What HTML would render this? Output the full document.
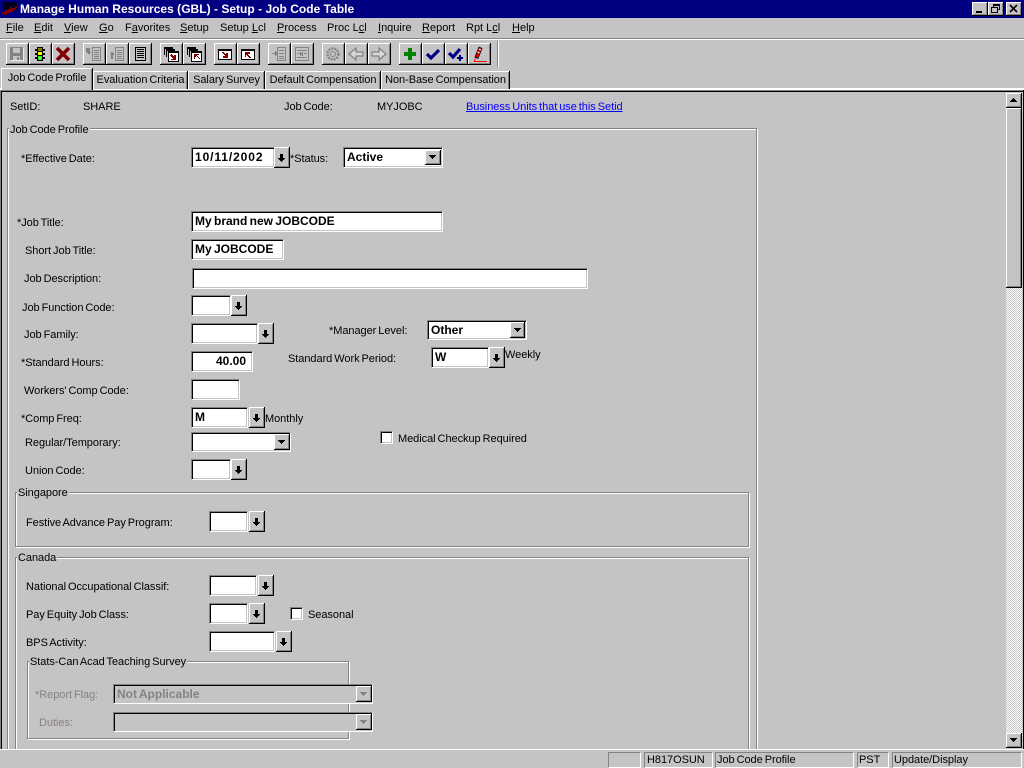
<!DOCTYPE html>
<html><head><meta charset="utf-8"><title>Manage Human Resources</title>
<style>
html,body{margin:0;padding:0;width:1024px;height:768px;overflow:hidden;background:#c6c3c6}
body{position:relative;font:11px/13px "Liberation Sans",sans-serif;color:#000;word-spacing:-1px;letter-spacing:-.05px}
div,span,a,svg{position:absolute}
u{position:static}
.t{white-space:nowrap}
.m{word-spacing:0;letter-spacing:0}
.f{box-sizing:border-box;background:#fff;border:1px solid;border-color:#848284 #fff #fff #848284;box-shadow:inset 1px 1px 0 #000,inset -1px -1px 0 #c6c3c6;font:bold 12px/15px "Liberation Sans",sans-serif;padding:2px 0 0 3px;white-space:nowrap;letter-spacing:0}
.d{background:#c6c3c6;color:#848284}
.b{box-sizing:border-box;background:#c6c3c6;box-shadow:inset -1px -1px 0 #000,inset 1px 1px 0 #fff,inset -2px -2px 0 #848284}
.tb{top:43px;width:23px;height:22px}
.tb svg{left:3px;top:3px;width:16px;height:16px}
.tab{box-sizing:border-box;top:71px;height:18px;background:#c6c3c6;border-left:1px solid #fff;border-top:1px solid #fff;box-shadow:inset -1px 0 0 #848284,1px 0 0 #000;text-align:center;line-height:17px;white-space:nowrap}
.g{box-sizing:border-box;border:1px solid #848284;box-shadow:inset 1px 1px 0 #fff,1px 1px 0 #fff}
.lg{background:#c6c3c6;padding:0 1px;white-space:nowrap}
.s{box-sizing:border-box;top:752px;height:16px;border:1px solid;border-color:#848284 #fff #fff #848284;padding-left:1px;line-height:15px;white-space:nowrap}
.dis{color:#848284}
</style></head><body>
<svg width="0" height="0" style="left:0;top:0"><defs>
<symbol id="la" viewBox="0 0 7 8"><path d="M2 0h3v4h2v1h-1v1h-1v1h-1v1h-1v-1h-1v-1h-1v-1h-1v-1h2z"/></symbol>
<symbol id="ca" viewBox="0 0 7 4"><path d="M0 0h7v1h-1v1h-1v1h-1v1h-1v-1h-1v-1h-1v-1h-1z"/></symbol>
<symbol id="cu" viewBox="0 0 7 4"><path d="M3 0h1v1h1v1h1v1h1v1h-7v-1h1v-1h1v-1h1z"/></symbol>
</defs></svg>

<!-- Title bar -->
<div style="left:0;top:0;width:1024px;height:18px;background:#000080"></div>
<svg style="left:2px;top:1px" width="16" height="16" viewBox="0 0 16 16" shape-rendering="crispEdges"><path fill="#000" d="M1 1h14v8h-14z" opacity=".75"/><path fill="#840000" d="M0 11h3v-2h3v-1h2v-2h2v1h3v-2h2v2h-1v2h-3v2h-3v1h-3v2h-3v-1h-2z"/></svg>
<span class="t" style="left:20px;top:2px;color:#fff;font:bold 12px/15px 'Liberation Sans',sans-serif;letter-spacing:.02px;word-spacing:0">Manage Human Resources (GBL) - Setup - Job Code Table</span>
<div class="b" style="left:972px;top:2px;width:16px;height:14px"><div style="left:4px;top:9px;width:6px;height:2px;background:#000"></div></div>
<div class="b" style="left:988px;top:2px;width:16px;height:14px"><svg style="left:3px;top:2px" width="9" height="9" viewBox="0 0 9 9" shape-rendering="crispEdges"><path d="M2 0h7v6h-2v3h-7v-6h2zM3 1v2h4v2h1v-3h-5zM1 4v4h5v-4z" fill-rule="evenodd"/></svg></div>
<div class="b" style="left:1006px;top:2px;width:16px;height:14px"><svg style="left:3px;top:2px" width="9" height="9" viewBox="0 0 9 9"><path d="M1 1l7 7M8 1l-7 7" stroke="#000" stroke-width="1.6"/></svg></div>

<!-- Menu -->
<span class="t m" style="left:6px;top:22px"><u>F</u>ile</span>
<span class="t m" style="left:34px;top:22px"><u>E</u>dit</span>
<span class="t m" style="left:64px;top:22px"><u>V</u>iew</span>
<span class="t m" style="left:99px;top:22px"><u>G</u>o</span>
<span class="t m" style="left:125px;top:22px">F<u>a</u>vorites</span>
<span class="t m" style="left:180px;top:22px"><u>S</u>etup</span>
<span class="t m" style="left:220px;top:22px">Setup <u>L</u>cl</span>
<span class="t m" style="left:277px;top:22px"><u>P</u>rocess</span>
<span class="t m" style="left:327px;top:22px">Proc L<u>c</u>l</span>
<span class="t m" style="left:378px;top:22px"><u>I</u>nquire</span>
<span class="t m" style="left:422px;top:22px"><u>R</u>eport</span>
<span class="t m" style="left:466px;top:22px">Rpt L<u>c</u>l</span>
<span class="t m" style="left:512px;top:22px"><u>H</u>elp</span>
<div style="left:0;top:38px;width:1024px;height:1px;background:#848284"></div>
<div style="left:0;top:39px;width:1024px;height:1px;background:#fff"></div>

<!-- Toolbar -->
<div class="b tb" style="left:6px"><svg viewBox="0 0 16 16" shape-rendering="crispEdges"><path fill="#fff" d="M2 2h13v13h-13z" opacity=".7"/><path fill="#848284" d="M1 1h13v13h-13z"/><path fill="#c6c3c6" d="M4 2h7v5h-7zM4 10h7v4h-7z"/><path fill="#848284" d="M8 11h2v3h-2z"/></svg></div>
<div class="b tb" style="left:29px"><svg viewBox="0 0 16 16" shape-rendering="crispEdges"><path fill="#000" d="M5 1h6v14h-6zM3 3h2v2h-2zM11 3h2v2h-2zM3 7h2v2h-2zM11 7h2v2h-2zM3 11h2v2h-2zM11 11h2v2h-2z"/><path fill="#ffff00" d="M6 6h4v3h-4z"/><path fill="#848200" d="M6 2h4v3h-4z"/><path fill="#00ff00" d="M6 10h4v4h-4z"/><path fill="#c6c3c6" d="M7 11h2v2h-2z"/></svg></div>
<div class="b tb" style="left:52px"><svg viewBox="0 0 16 16"><path d="M2 2l12 12M14 2l-12 12" stroke="#840000" stroke-width="3.6"/></svg></div>

<div class="b tb" style="left:83px"><svg viewBox="0 0 16 16" shape-rendering="crispEdges"><path fill="#848284" d="M0 2h4v4h1v1h-1v1h-2v-1h-1v-1h-1zM6 1h9v14h-9zM7 2v12h7v-12z" fill-rule="evenodd"/><path fill="#848284" d="M8 4h5v1h-5zM8 6h5v1h-5zM8 8h5v1h-5zM8 10h5v1h-5zM8 12h5v1h-5z"/></svg></div>
<div class="b tb" style="left:106px"><svg viewBox="0 0 16 16" shape-rendering="crispEdges"><path fill="#848284" d="M2 6h2v1h1v2h-1v4h-2v-4h-1v-1h1zM6 1h9v14h-9zM7 2v12h7v-12z" fill-rule="evenodd"/><path fill="#848284" d="M8 4h5v1h-5zM8 6h5v1h-5zM8 8h5v1h-5zM8 10h5v1h-5zM8 12h5v1h-5z"/></svg></div>
<div class="b tb" style="left:129px"><svg viewBox="0 0 16 16" shape-rendering="crispEdges"><path fill="#000" d="M3 1h11v14h-11zM4 2v12h9v-12z" fill-rule="evenodd"/><path fill="#000" d="M5 3h7v1h-7zM5 5h7v1h-7zM5 7h7v1h-7zM5 9h7v1h-7zM5 11h7v1h-7z"/></svg></div>

<div class="b tb" style="left:160px"><svg viewBox="0 0 16 16" shape-rendering="crispEdges"><path fill="#000" d="M1 1h9v1h-8v7h-1zM2 1h8v2h-8zM3 3h9v1h-8v7h-1zM4 3h8v2h-8z"/><path fill="#000" d="M5 5h11v11h-11z"/><path fill="#fff" d="M6 7h9v8h-9z"/><path fill="#840000" d="M8 8h1v1h1v1h1v-1h2v5h-5v-1h2v-1h-1v-1h-1v-1h-1z"/></svg></div>
<div class="b tb" style="left:183px"><svg viewBox="0 0 16 16" shape-rendering="crispEdges"><path fill="#000" d="M1 1h9v1h-8v7h-1zM2 1h8v2h-8zM3 3h9v1h-8v7h-1zM4 3h8v2h-8z"/><path fill="#000" d="M5 5h11v11h-11z"/><path fill="#fff" d="M6 7h9v8h-9z"/><path fill="#840000" d="M8 8h5v1h-2v1h1v1h1v1h1v1h-1v-1h-1v-1h-1v-1h-1v1h-1v2h-1z"/></svg></div>

<div class="b tb" style="left:214px"><svg viewBox="0 0 16 16" shape-rendering="crispEdges"><path fill="#000" d="M1 3h14v11h-14z"/><path fill="#fff" d="M2 5h12v8h-12z"/><path fill="#840000" d="M5 6h2v1h1v1h1v-1h2v5h-5v-2h2v-1h-1v-1h-1v-1h-1z"/></svg></div>
<div class="b tb" style="left:237px"><svg viewBox="0 0 16 16" shape-rendering="crispEdges"><path fill="#000" d="M1 3h14v11h-14z"/><path fill="#fff" d="M2 5h12v8h-12z"/><path fill="#840000" d="M5 6h5v2h-2v1h1v1h1v1h1v1h-2v-1h-1v-1h-1v-1h-1v2h-1z"/></svg></div>

<div class="b tb" style="left:268px"><svg viewBox="0 0 16 16" shape-rendering="crispEdges"><path fill="#848284" d="M6 1h9v14h-9zM7 2v12h7v-12z" fill-rule="evenodd"/><path fill="#848284" d="M8 4h5v1h-5zM8 7h5v1h-5zM8 10h5v1h-5zM8 12h5v1h-5zM1 7h3v-2h1v1h1v1h1v1h-1v1h-1v1h-1v-2h-3z"/></svg></div>
<div class="b tb" style="left:291px"><svg viewBox="0 0 16 16" shape-rendering="crispEdges"><path fill="#848284" d="M1 1h14v14h-14zM2 2v12h12v-12z" fill-rule="evenodd"/><path fill="#848284" d="M3 4h10v1h-10zM3 11h10v1h-10zM3 7h3v1h-3zM10 7h3v1h-3zM6 6h1v1h1v-1h1v4h-1v-1h-1v1h-1z"/></svg></div>

<div class="b tb" style="left:322px"><svg viewBox="0 0 16 16"><circle cx="8" cy="8" r="5.5" fill="none" stroke="#848284" stroke-width="2.4" stroke-dasharray="2 1"/><circle cx="8" cy="8" r="2.5" fill="none" stroke="#848284"/></svg></div>
<div class="b tb" style="left:345px"><svg viewBox="0 0 16 16"><path d="M1 8l7-6v4h7v4h-7v4z" fill="#d8d6d8" stroke="#848284" stroke-width="1.300"/></svg></div>
<div class="b tb" style="left:368px"><svg viewBox="0 0 16 16"><path d="M15 8l-7-6v4h-7v4h7v4z" fill="#d8d6d8" stroke="#848284" stroke-width="1.300"/></svg></div>

<div class="b tb" style="left:399px"><svg viewBox="0 0 16 16" shape-rendering="crispEdges"><path fill="#008200" d="M6 2h4v4h4v4h-4v4h-4v-4h-4v-4h4z"/></svg></div>
<div class="b tb" style="left:422px"><svg viewBox="0 0 16 16"><path d="M2 8l4 4 8-8" fill="none" stroke="#000084" stroke-width="3.200"/></svg></div>
<div class="b tb" style="left:445px"><svg viewBox="0 0 16 16"><path d="M1 7l4 4 7-8" fill="none" stroke="#000084" stroke-width="3.200"/><path d="M9 12h6M12 9v6" stroke="#000084" stroke-width="2"/></svg></div>
<div class="b tb" style="left:468px"><svg viewBox="0 0 18 16" style="width:18px"><path d="M4 11l4-10 3 1.500-4 10z" fill="#e00000" stroke="#000" stroke-width=".8"/><path d="M6.500 6l2 1M8 3l2 1" stroke="#fff" stroke-width="1.200"/><path d="M3 15.500l1.500-3" stroke="#f00"/><path d="M3 15.500h13" stroke="#f00" stroke-width="1"/></svg></div>
<div style="left:497px;top:41px;width:1px;height:26px;background:#848284"></div>
<div style="left:498px;top:41px;width:1px;height:26px;background:#fff"></div>

<!-- Tabs -->
<div style="left:0;top:88px;width:1024px;height:2px;background:#fff"></div>
<div class="tab" style="left:93px;width:94px">Evaluation Criteria</div>
<div class="tab" style="left:188px;width:76px">Salary Survey</div>
<div class="tab" style="left:265px;width:115px">Default Compensation</div>
<div class="tab" style="left:381px;width:128px">Non-Base Compensation</div>
<div class="tab" style="left:1px;top:68px;width:91px;height:22px;line-height:18px;z-index:2;box-shadow:inset -1px 0 0 #848284,1px 0 0 #000">Job Code Profile</div>

<!-- Content frame -->
<div style="left:0;top:90px;width:1024px;height:1px;background:#848284"></div>
<div style="left:0;top:91px;width:1024px;height:1px;background:#000"></div>
<div style="left:0;top:91px;width:1px;height:658px;background:#848284"></div>
<div style="left:1px;top:91px;width:1px;height:658px;background:#000"></div>
<div style="left:1023px;top:90px;width:1px;height:659px;background:#000"></div>

<span class="t" style="left:10px;top:101px">SetID:</span>
<span class="t" style="left:83px;top:101px">SHARE</span>
<span class="t" style="left:284px;top:101px">Job Code:</span>
<span class="t" style="left:377px;top:101px">MYJOBC</span>
<a class="t" href="#" style="left:466px;top:101px;color:#0000ff;text-decoration:underline">Business Units that use this Setid</a>

<!-- Group boxes -->
<div class="g" style="left:7px;top:128px;width:750px;height:630px"></div>
<span class="t lg" style="left:9px;top:124px">Job Code Profile</span>
<div class="g" style="left:15px;top:492px;width:734px;height:55px"></div>
<span class="t lg" style="left:17px;top:487px">Singapore</span>
<div class="g" style="left:15px;top:557px;width:734px;height:200px"></div>
<span class="t lg" style="left:17px;top:552px">Canada</span>
<div class="g" style="left:27px;top:661px;width:322px;height:78px"></div>
<span class="t lg dis" style="left:29px;top:656px;color:#000">Stats-Can Acad Teaching Survey</span>

<!-- Labels -->
<span class="t" style="left:21px;top:153px">*Effective Date:</span>
<span class="t" style="left:290px;top:153px">*Status:</span>
<span class="t" style="left:17px;top:217px">*Job Title:</span>
<span class="t" style="left:25px;top:245px">Short Job Title:</span>
<span class="t" style="left:24px;top:273px">Job Description:</span>
<span class="t" style="left:22px;top:302px">Job Function Code:</span>
<span class="t" style="left:24px;top:329px">Job Family:</span>
<span class="t" style="left:21px;top:357px">*Standard Hours:</span>
<span class="t" style="left:24px;top:385px">Workers' Comp Code:</span>
<span class="t" style="left:21px;top:413px">*Comp Freq:</span>
<span class="t" style="left:25px;top:437px">Regular/Temporary:</span>
<span class="t" style="left:25px;top:465px">Union Code:</span>
<span class="t" style="left:26px;top:517px">Festive Advance Pay Program:</span>
<span class="t" style="left:26px;top:581px">National Occupational Classif:</span>
<span class="t" style="left:26px;top:609px">Pay Equity Job Class:</span>
<span class="t" style="left:26px;top:637px">BPS Activity:</span>
<span class="t dis" style="left:35px;top:689px">*Report Flag:</span>
<span class="t dis" style="left:39px;top:717px">Duties:</span>
<span class="t" style="left:329px;top:325px">*Manager Level:</span>
<span class="t" style="left:288px;top:353px">Standard Work Period:</span>
<span class="t" style="left:505px;top:349px">Weekly</span>
<span class="t" style="left:265px;top:413px">Monthly</span>
<span class="t" style="left:398px;top:433px">Medical Checkup Required</span>
<span class="t" style="left:308px;top:609px">Seasonal</span>

<!-- Checkboxes -->
<div class="f" style="left:380px;top:431px;width:13px;height:13px;padding:0"></div>
<div class="f" style="left:290px;top:607px;width:13px;height:13px;padding:0"></div>

<!-- Fields -->
<div class="f" style="left:191px;top:147px;width:84px;height:21px;letter-spacing:.9px">10/11/2002</div>
<div class="b" style="left:274px;top:147px;width:16px;height:21px"><svg style="left:4px;top:7px" width="7" height="8"><use href="#la"/></svg></div>

<div class="f" style="left:343px;top:147px;width:100px;height:21px">Active</div>
<div class="b" style="left:425px;top:150px;width:16px;height:15px"><svg style="left:4px;top:5px" width="7" height="4"><use href="#ca"/></svg></div>

<div class="f" style="left:191px;top:211px;width:252px;height:21px;word-spacing:-1px">My brand new JOBCODE</div>
<div class="f" style="left:191px;top:239px;width:93px;height:21px;word-spacing:-1px">My JOBCODE</div>
<div class="f" style="left:192px;top:268px;width:396px;height:21px"></div>

<div class="f" style="left:191px;top:295px;width:40px;height:21px"></div>
<div class="b" style="left:231px;top:295px;width:16px;height:21px"><svg style="left:4px;top:7px" width="7" height="8"><use href="#la"/></svg></div>

<div class="f" style="left:191px;top:323px;width:67px;height:21px"></div>
<div class="b" style="left:258px;top:323px;width:16px;height:21px"><svg style="left:4px;top:7px" width="7" height="8"><use href="#la"/></svg></div>

<div class="f" style="left:427px;top:320px;width:100px;height:20px">Other</div>
<div class="b" style="left:510px;top:322px;width:15px;height:16px"><svg style="left:4px;top:6px" width="7" height="4"><use href="#ca"/></svg></div>

<div class="f" style="left:191px;top:351px;width:62px;height:21px;text-align:right;padding-right:6px">40.00</div>
<div class="f" style="left:431px;top:347px;width:58px;height:21px">W</div>
<div class="b" style="left:489px;top:347px;width:16px;height:21px"><svg style="left:4px;top:7px" width="7" height="8"><use href="#la"/></svg></div>

<div class="f" style="left:191px;top:379px;width:49px;height:21px"></div>

<div class="f" style="left:191px;top:407px;width:57px;height:21px">M</div>
<div class="b" style="left:249px;top:407px;width:16px;height:21px"><svg style="left:4px;top:7px" width="7" height="8"><use href="#la"/></svg></div>

<div class="f" style="left:191px;top:432px;width:100px;height:20px"></div>
<div class="b" style="left:274px;top:434px;width:16px;height:16px"><svg style="left:4px;top:6px" width="7" height="4"><use href="#ca"/></svg></div>

<div class="f" style="left:191px;top:459px;width:40px;height:21px"></div>
<div class="b" style="left:231px;top:459px;width:16px;height:21px"><svg style="left:4px;top:7px" width="7" height="8"><use href="#la"/></svg></div>

<div class="f" style="left:209px;top:511px;width:39px;height:21px"></div>
<div class="b" style="left:249px;top:511px;width:16px;height:21px"><svg style="left:4px;top:7px" width="7" height="8"><use href="#la"/></svg></div>

<div class="f" style="left:209px;top:575px;width:48px;height:21px"></div>
<div class="b" style="left:258px;top:575px;width:16px;height:21px"><svg style="left:4px;top:7px" width="7" height="8"><use href="#la"/></svg></div>

<div class="f" style="left:209px;top:603px;width:39px;height:21px"></div>
<div class="b" style="left:249px;top:603px;width:16px;height:21px"><svg style="left:4px;top:7px" width="7" height="8"><use href="#la"/></svg></div>

<div class="f" style="left:209px;top:631px;width:66px;height:21px"></div>
<div class="b" style="left:276px;top:631px;width:16px;height:21px"><svg style="left:4px;top:7px" width="7" height="8"><use href="#la"/></svg></div>

<div class="f d" style="left:113px;top:684px;width:260px;height:20px;word-spacing:-1px">Not Applicable</div>
<div class="b" style="left:356px;top:686px;width:16px;height:16px"><svg style="left:4px;top:6px" width="7" height="4" fill="#848284"><use href="#ca"/></svg></div>
<div class="f d" style="left:113px;top:712px;width:260px;height:20px"></div>
<div class="b" style="left:356px;top:714px;width:16px;height:16px"><svg style="left:4px;top:6px" width="7" height="4" fill="#848284"><use href="#ca"/></svg></div>

<!-- Scrollbar -->
<div style="left:1006px;top:93px;width:16px;height:654px;background-color:#fff;background-image:conic-gradient(#c6c3c6 25%,#fff 0 50%,#c6c3c6 0 75%,#fff 0);background-size:2px 2px"></div>
<div class="b" style="left:1006px;top:93px;width:16px;height:15px"><svg style="left:4px;top:5px" width="7" height="4"><use href="#cu"/></svg></div>
<div class="b" style="left:1006px;top:108px;width:16px;height:180px"></div>
<div class="b" style="left:1006px;top:733px;width:16px;height:15px"><svg style="left:4px;top:5px" width="7" height="4"><use href="#ca"/></svg></div>

<!-- Status bar -->
<div style="left:0;top:749px;width:1024px;height:19px;background:#c6c3c6"></div>
<div style="left:0;top:749px;width:1024px;height:1px;background:#fff"></div>
<div class="s" style="left:608px;width:33px"></div>
<div class="s" style="left:644px;width:69px;padding-left:2px">H817OSUN</div>
<div class="s" style="left:715px;width:139px">Job Code Profile</div>
<div class="s" style="left:857px;width:32px">PST</div>
<div class="s" style="left:892px;width:130px">Update/Display</div>
</body></html>
